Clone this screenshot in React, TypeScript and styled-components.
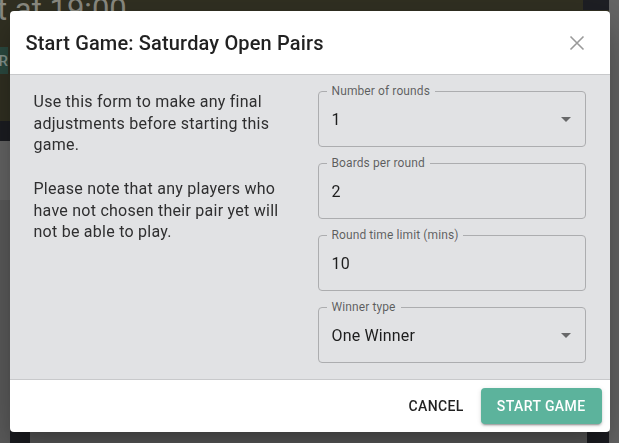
import React from 'react';
import styled, { createGlobalStyle } from 'styled-components';

const GlobalStyle = createGlobalStyle`
  html, body { margin: 0; padding: 0; height: 100%; }
  body { font-family: Roboto, "Liberation Sans", Arial, sans-serif; overflow: hidden; }
  #root { height: 100%; }
  *, *::before, *::after { box-sizing: border-box; }
`;

/* ---------- dimmed page behind the dialog ---------- */
const Page = styled.div`
  display: flex;
  width: 619px;
  height: 443px;
  background: #5b5b5b;
`;
const Main = styled.div`
  flex: 1;
  display: flex;
  flex-direction: column;
  min-width: 0;
`;
const ScrollStrip = styled.div`
  width: 10px;
  background: #666666;
`;
const TopBand = styled.div`
  height: 121px;
  display: flex;
  background: #313022;
`;
const TopMain = styled.div`
  flex: 1;
  display: flex;
  flex-direction: column;
  overflow: hidden;
`;
const TopCorner = styled.div`
  width: 26px;
  height: 10px;
  background: #1e1f24;
`;
const BigTitle = styled.div`
  font-size: 31px;
  line-height: 30px;
  color: #8b8b82;
  margin: -5px 0 0 -3px;
  white-space: nowrap;
`;
const GhostButton = styled.div`
  margin: 22px 0 0 -52px;
  width: 60px;
  height: 27px;
  background: #2b4a40;
  color: #87968f;
  font-size: 15px;
  font-weight: 500;
  display: flex;
  align-items: center;
  justify-content: flex-end;
`;
const NavBar = styled.div`
  height: 20px;
  background: #1c1d22;
`;
const BodyRow = styled.div`
  flex: 1;
  display: flex;
`;
const Gutter = styled.div`
  width: 10px;
  background: linear-gradient(#666666 0 59px, #5c5c5c 59px);
`;
const DarkCol = styled.div<{ $w: number }>`
  width: ${(p) => p.$w}px;
  background: #1c1d22;
`;
const Fill = styled.div`
  flex: 1;
  background: #5b5b5b;
`;

/* ---------- dialog ---------- */
const Overlay = styled.div`
  position: fixed;
  inset: 0;
  display: flex;
  align-items: center;
  justify-content: center;
`;
const Dialog = styled.div`
  width: 600px;
  background: #ffffff;
  border-radius: 4px;
  overflow: hidden;
  display: flex;
  flex-direction: column;
  box-shadow: 0px 11px 15px -7px rgba(0, 0, 0, 0.2), 0px 24px 38px 3px rgba(0, 0, 0, 0.14),
    0px 9px 46px 8px rgba(0, 0, 0, 0.12);
`;
const Header = styled.div`
  height: 64px;
  display: flex;
  align-items: center;
  justify-content: space-between;
  padding: 0 13px 0 16px;
  border-bottom: 1px solid #c8c9cb;
`;
const Title = styled.h2`
  margin: 0;
  font-size: 20px;
  font-weight: 500;
  letter-spacing: 0.15px;
  color: rgba(0, 0, 0, 0.87);
`;
const CloseButton = styled.button`
  width: 40px;
  height: 40px;
  border: none;
  background: transparent;
  padding: 0;
  display: flex;
  align-items: center;
  justify-content: center;
  color: #9a9a9a;
  cursor: pointer;
`;
const Content = styled.div`
  background: #e1e2e4;
  padding: 16px 24px;
  display: grid;
  grid-template-columns: 1fr 1fr;
  column-gap: 16px;
`;
const Intro = styled.div`
  font-size: 16px;
  line-height: 21.7px;
  color: #2f2f30;
  letter-spacing: 0.25px;
`;
const Paragraph = styled.p`
  margin: 0 0 21.7px;
`;
const Fields = styled.div`
  display: flex;
  flex-direction: column;
  gap: 16px;
`;
const FieldBox = styled.div`
  position: relative;
  height: 56px;
  border: 1px solid #acadaf;
  border-radius: 4px;
  display: flex;
  align-items: center;
  justify-content: space-between;
  padding: 0 7px 0 13px;
`;
const FieldLabel = styled.span`
  position: absolute;
  top: -9px;
  left: 8px;
  padding: 0 5px;
  background: #e1e2e4;
  font-size: 12px;
  line-height: 16px;
  color: rgba(0, 0, 0, 0.6);
  letter-spacing: 0.1px;
`;
const FieldValue = styled.span`
  font-size: 16px;
  color: rgba(0, 0, 0, 0.87);
  letter-spacing: 0.15px;
`;
const Arrow = styled.svg`
  width: 24px;
  height: 24px;
  fill: rgba(0, 0, 0, 0.54);
`;
const Footer = styled.div`
  border-top: 1px solid #c8c9cb;
  padding: 8px;
  display: flex;
  justify-content: flex-end;
  gap: 9px;
`;
const Button = styled.button<{ $primary?: boolean }>`
  height: 36px;
  border: none;
  border-radius: 4px;
  font-family: inherit;
  font-size: 14px;
  font-weight: 500;
  letter-spacing: 0.4px;
  text-transform: uppercase;
  padding: ${(p) => (p.$primary ? '0 16px' : '0 8px')};
  color: ${(p) => (p.$primary ? '#ffffff' : 'rgba(0,0,0,0.87)')};
  background: ${(p) => (p.$primary ? '#5cb39c' : 'transparent')};
  box-shadow: ${(p) =>
    p.$primary
      ? '0px 3px 1px -2px rgba(0,0,0,0.2), 0px 2px 2px 0px rgba(0,0,0,0.14), 0px 1px 5px 0px rgba(0,0,0,0.12)'
      : 'none'};
  cursor: pointer;
`;

type Field = { label: string; value: string; select?: boolean };

const fields: Field[] = [
  { label: 'Number of rounds', value: '1', select: true },
  { label: 'Boards per round', value: '2' },
  { label: 'Round time limit (mins)', value: '10' },
  { label: 'Winner type', value: 'One Winner', select: true },
];

export default function App() {
  return (
    <>
      <GlobalStyle />
      <Page>
        <Main>
          <TopBand>
            <TopMain>
              <BigTitle>t at 19:00</BigTitle>
              <GhostButton>R</GhostButton>
            </TopMain>
            <TopCorner />
          </TopBand>
          <NavBar />
          <BodyRow>
            <Gutter />
            <DarkCol $w={20} />
            <Fill />
            <DarkCol $w={22} />
          </BodyRow>
        </Main>
        <ScrollStrip />
      </Page>
      <Overlay>
        <Dialog>
          <Header>
            <Title>Start Game: Saturday Open Pairs</Title>
            <CloseButton aria-label="close">
              <svg width="16" height="16" viewBox="0 0 16 16">
                <path d="M1.5 1.5 L14.5 14.5 M14.5 1.5 L1.5 14.5" stroke="currentColor" strokeWidth="1.6" />
              </svg>
            </CloseButton>
          </Header>
          <Content>
            <Intro>
              <Paragraph>Use this form to make any final adjustments before starting this game.</Paragraph>
              <Paragraph>Please note that any players who have not chosen their pair yet will not be able to play.</Paragraph>
            </Intro>
            <Fields>
              {fields.map((f) => (
                <FieldBox key={f.label}>
                  <FieldLabel>{f.label}</FieldLabel>
                  <FieldValue>{f.value}</FieldValue>
                  {f.select && (
                    <Arrow viewBox="0 0 24 24">
                      <path d="M7 10l5 5 5-5z" />
                    </Arrow>
                  )}
                </FieldBox>
              ))}
            </Fields>
          </Content>
          <Footer>
            <Button>Cancel</Button>
            <Button $primary>Start Game</Button>
          </Footer>
        </Dialog>
      </Overlay>
    </>
  );
}
